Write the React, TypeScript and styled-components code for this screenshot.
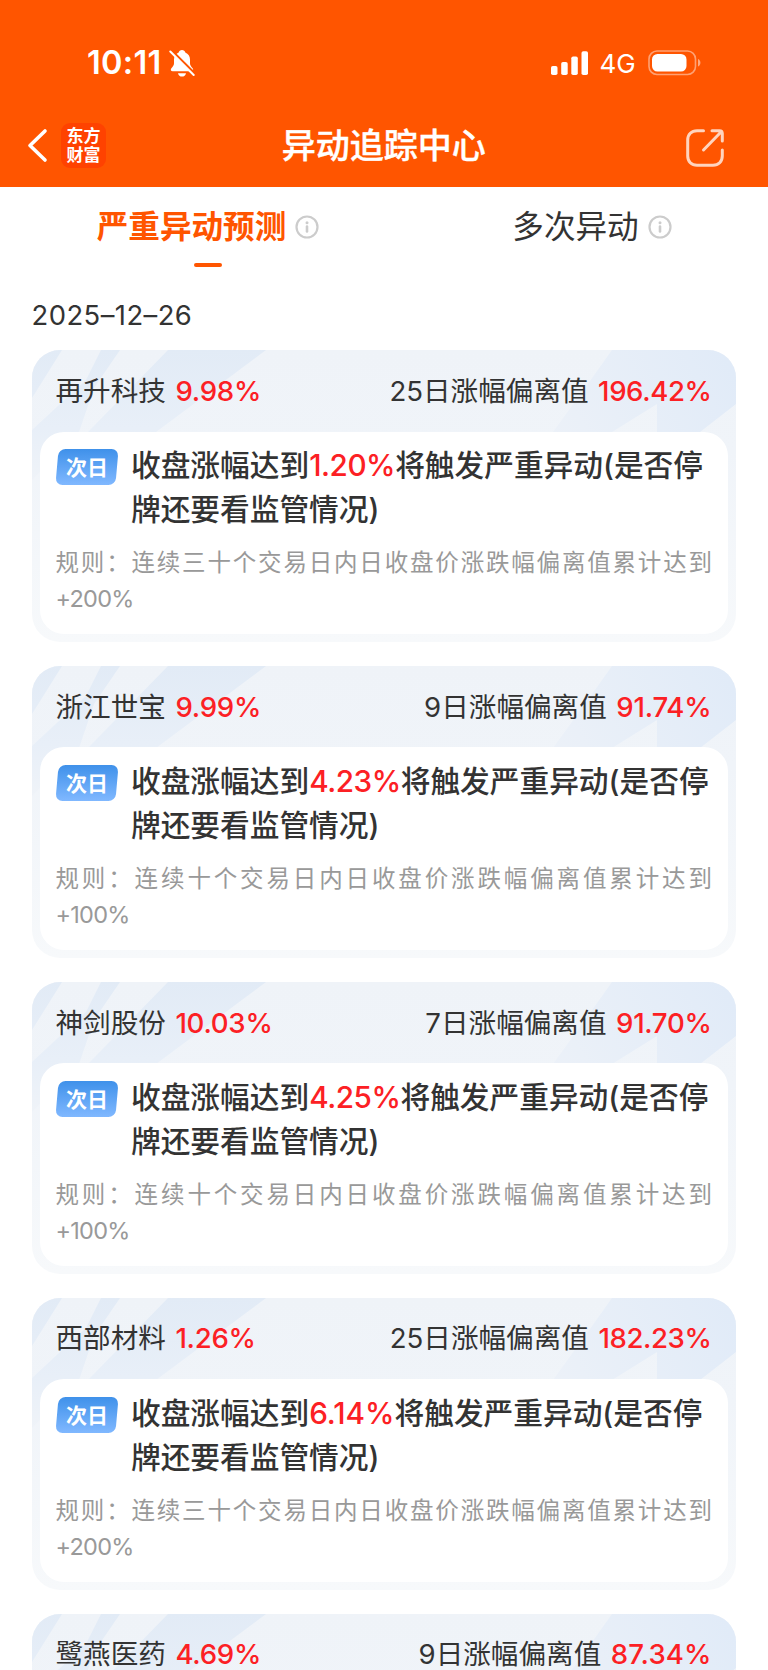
import React from "react";
import styled, { createGlobalStyle } from "styled-components";

const GlobalStyle = createGlobalStyle`
  * { box-sizing: border-box; }
  body {
    margin: 0;
    background: #fff;
    color: #333;
    font-family: Inter, "Noto Sans CJK SC", sans-serif;
  }
`;

const Screen = styled.main`
  width: 768px;
  height: 1670px;
  overflow: hidden;
  background: #fff;
`;

const Header = styled.header`
  height: 187px;
  background: #ff5500;
  color: #fff;
`;

const StatusBar = styled.div`
  height: 104px;
  padding: 22px 67px 0 87px;
  display: flex;
  align-items: center;
  justify-content: space-between;
`;

const StatusGroup = styled.div`
  display: flex;
  align-items: center;
`;

const Clock = styled.span`
  font-size: 32.5px;
  font-weight: 600;
  line-height: 40px;
  letter-spacing: 0.3px;
  width: 82px;
`;

const Network = styled.span`
  font-size: 26px;
  line-height: 32px;
  margin: 2px 12.5px 0 10.5px;
  width: 36px;
`;

const NavBar = styled.div`
  height: 83px;
  padding: 0 44.5px 0 27px;
  display: grid;
  grid-template-columns: 1fr auto 1fr;
  align-items: center;
`;

const NavLeft = styled.div`
  display: flex;
  align-items: center;
  gap: 13px;
`;

const Logo = styled.div`
  width: 45px;
  height: 45px;
  border-radius: 9px;
  background: #ff4200;
  display: flex;
  flex-direction: column;
  align-items: center;
  padding-top: 2px;
  font-family: "Noto Sans CJK SC", sans-serif;
  font-weight: 700;
  font-size: 17px;
`;

const LogoLine = styled.span`
  display: block;
  height: 19px;
  line-height: 19px;
`;

const Title = styled.h1`
  margin: 1px 0 0;
  padding-left: 17px;
  font-size: 34px;
  font-weight: 500;
  line-height: 48px;
  -webkit-text-stroke: 0.4px currentColor;
`;

const NavRight = styled.div`
  display: flex;
  justify-content: flex-end;
  padding-top: 5px;
`;

const Tabs = styled.nav`
  height: 92px;
  display: grid;
  grid-template-columns: 416px 352px;
`;

const Tab = styled.div<{ $active?: boolean }>`
  display: flex;
  flex-direction: column;
  align-items: center;
  padding-top: 16px;
  color: ${(p) => (p.$active ? "#ff5500" : "#333")};
  font-size: 31.6px;
  font-weight: ${(p) => (p.$active ? 700 : 400)};
  line-height: 46px;
`;

const TabLabel = styled.div`
  display: flex;
  align-items: flex-start;
  gap: 9px;
  height: 48px;

  svg {
    margin-top: 11.5px;
  }
`;

const TabText = styled.span`
  padding-top: 1px;
`;

const Underline = styled.div`
  width: 28px;
  height: 4px;
  margin-top: 11.5px;
  border-radius: 2px;
  background: #ff5500;
`;

const DateLine = styled.div`
  height: 71px;
  padding: 18px 31.5px 0;
  font-size: 27.4px;
  letter-spacing: 0.45px;
  line-height: 36px;
`;

const CardList = styled.section`
  padding: 0 32px;
  display: flex;
  flex-direction: column;
  gap: 23.6px;
`;

const CardBox = styled.article`
  position: relative;
  flex: none;
  height: 292.3px;
  padding: 0 8px 8px;
  border-radius: 28px;
  overflow: hidden;
  background: linear-gradient(#eff3f8 0%, #f0f4f9 35%, #f7f9fb 100%);
  display: flex;
  flex-direction: column;
`;

const Stripes = styled.svg`
  position: absolute;
  top: 0;
  left: 0;
`;

const CardHead = styled.div`
  position: relative;
  height: 81.5px;
  padding: 0 16.5px 0 15.5px;
  display: flex;
  align-items: center;
  justify-content: space-between;
  font-size: 27.6px;
  line-height: 40px;
`;

const HeadItem = styled.div`
  display: flex;
  align-items: baseline;
  gap: 9.5px;
`;

const Rate = styled.span<{ $tracking?: number }>`
  color: #fc2024;
  font-weight: 500;
  font-size: 27.6px;
  letter-spacing: ${(p) => p.$tracking ?? -0.25}px;
`;

const Panel = styled.div`
  position: relative;
  flex: 1;
  border-radius: 24px;
  background: #fff;
  padding: 11.5px 16px 0 15.5px;
`;

const Forecast = styled.div`
  display: flex;
  align-items: flex-start;
  gap: 12.5px;
`;

const Badge = styled.div`
  position: relative;
  flex: none;
  width: 63px;
  height: 36px;
  margin-top: 6px;
  display: flex;
  align-items: center;
  justify-content: center;
  color: #fff;
  font-family: "Noto Sans CJK SC", sans-serif;
  font-size: 21px;
  font-weight: 700;
  line-height: 34px;
  padding-bottom: 2px;
  z-index: 0;
  &::before {
    content: "";
    position: absolute;
    inset: 0 1.5px;
    z-index: -1;
    border-radius: 7px;
    transform: skewX(-5deg);
    background: linear-gradient(#3f91ea, #80b8ff);
  }
`;

const ForecastText = styled.p`
  margin: 0;
  flex: 1;
  white-space: nowrap;
  font-size: 29.7px;
  font-weight: 500;
  line-height: 44px;
`;

const Threshold = styled.span<{ $tracking?: number }>`
  color: #fc2024;
  letter-spacing: ${(p) => p.$tracking ?? -0.45}px;
`;

const Rule = styled.p`
  margin: 14px 0 0;
  font-size: 23.5px;
  line-height: 36px;
  color: #999;
  text-align: justify;
  width: 656.5px;
`;

const Limit = styled.span`
  letter-spacing: -0.75px;
`;

interface Stock {
  name: string;
  rate: string;
  days: number;
  deviation: string;
  deviationTracking: number;
  trigger: string;
  triggerTracking?: number;
  period: string;
  limit: string;
}

const stocks: Stock[] = [
  { name: "再升科技", rate: "9.98%", days: 25, deviation: "196.42%", deviationTracking: -0.4, trigger: "1.20%", period: "三十", limit: "+200%" },
  { name: "浙江世宝", rate: "9.99%", days: 9, deviation: "91.74%", deviationTracking: -0.2, trigger: "4.23%", period: "十", limit: "+100%" },
  { name: "神剑股份", rate: "10.03%", days: 7, deviation: "91.70%", deviationTracking: -0.3, trigger: "4.25%", period: "十", limit: "+100%" },
  { name: "西部材料", rate: "1.26%", days: 25, deviation: "182.23%", deviationTracking: -0.4, trigger: "6.14%", triggerTracking: 0, period: "三十", limit: "+200%" },
  { name: "鹭燕医药", rate: "4.69%", days: 9, deviation: "87.34%", deviationTracking: 0.1, trigger: "5.36%", period: "十", limit: "+100%" },
];

const BellOff = () => (
  <svg width="26" height="29" viewBox="0 0 26 29" fill="none">
    <path d="M13 1c1.7 0 3 1 3.3 2.4 3 1.2 4.7 3.800 4.700 7.100v3.700c0 1.700.8 3 2.400 4.700 1.300 1.400.9 3.300-1 3.300H3.700c-2 0-2.500-1.900-1.100-3.300C4.200 17.200 5 15.900 5 14.200v-3.700c0-3.300 1.700-5.900 4.700-7.100C10 2 11.300 1 13 1Z" fill="#fff" />
    <path d="M9 24.200h8c-.5 2.200-2 3.400-4 3.400s-3.500-1.200-4-3.400Z" fill="#fff" />
    <path d="M2 1.300 26 25" stroke="#ff5500" strokeWidth="3" />
    <path d="M1.300 2.500 24.700 26" stroke="#fff" strokeWidth="2" strokeLinecap="round" />
  </svg>
);

const Signal = () => (
  <svg width="38" height="24" viewBox="0 0 38 24" fill="#fff">
    <rect x="0" y="15" width="6.500" height="9" rx="1.800" />
    <rect x="10.200" y="11" width="6.500" height="13" rx="1.800" />
    <rect x="20.300" y="5.500" width="6.500" height="18.500" rx="1.800" />
    <rect x="30.500" y="0.300" width="6.500" height="23.700" rx="1.800" />
  </svg>
);

const Battery = () => (
  <svg width="53" height="26" viewBox="0 0 53 26" fill="none">
    <rect x="1" y="1" width="46.500" height="23.500" rx="8" stroke="#fff" strokeOpacity="0.450" strokeWidth="1.600" />
    <rect x="4" y="4" width="34.500" height="17.500" rx="5.500" fill="#fff" />
    <path d="M50 9v7.500c1.500-.6 2.400-2 2.400-3.750S51.500 9.600 50 9Z" fill="#fff" fillOpacity="0.500" />
  </svg>
);

const BackIcon = () => (
  <svg width="21" height="35" viewBox="0 0 21 35" fill="none">
    <path d="M18 3 3 17.500 18 32" stroke="#fff" strokeWidth="3.600" strokeLinecap="round" strokeLinejoin="round" />
  </svg>
);

const ShareIcon = () => (
  <svg width="38" height="38" viewBox="0 0 38 38" fill="none" stroke="#ffd4be" strokeWidth="3" strokeLinecap="round" strokeLinejoin="round">
    <path d="M17.500 1.700H11C5.500 1.700 1.700 5.500 1.700 11v16c0 5.500 3.800 9.300 9.300 9.300h16c5.500 0 9.300-3.800 9.300-9.300v-6" />
    <path d="M26 1.700h7.500c1.800 0 2.800 1 2.800 2.800V12M35 3 17.500 21" />
  </svg>
);

const InfoIcon = () => (
  <svg width="24" height="24" viewBox="0 0 24 24" fill="none">
    <circle cx="12" cy="12" r="10.500" stroke="#ccc" strokeWidth="2.200" />
    <circle cx="12" cy="7.800" r="1.500" fill="#ccc" />
    <path d="M12 11.500v5" stroke="#ccc" strokeWidth="2.600" strokeLinecap="round" />
  </svg>
);

const CardStripes = () => (
  <Stripes width="704" height="292" viewBox="0 0 704 292">
    <defs>
      <linearGradient id="stripeLeft" x1="0" y1="0" x2="0" y2="130" gradientUnits="userSpaceOnUse">
        <stop offset="0" stopColor="#e2ebf6" />
        <stop offset="0.600" stopColor="#e8eff8" />
        <stop offset="1" stopColor="#eff3f8" />
      </linearGradient>
      <linearGradient id="stripeRight" x1="520" y1="90" x2="690" y2="0" gradientUnits="userSpaceOnUse">
        <stop offset="0" stopColor="#ecf1f8" />
        <stop offset="1" stopColor="#e1ebf8" />
      </linearGradient>
    </defs>
    <g fill="url(#stripeLeft)">
      <path d="M0 0h30L0 48Z" />
      <path d="M69 0h19L62 38 47 82 0 130V80L54 30Z" />
      <path d="M136 0h98L124 82H56Z" />
    </g>
    <path d="M580 0H704V54L668 82H625V54L580 82H521L558 31Z" fill="url(#stripeRight)" />
  </Stripes>
);

const StockCard = ({ stock }: { stock: Stock }) => (
  <CardBox>
    <CardStripes />
    <CardHead>
      <HeadItem>
        <span>{stock.name}</span>
        <Rate>{stock.rate}</Rate>
      </HeadItem>
      <HeadItem>
        <span>{stock.days}日涨幅偏离值</span>
        <Rate $tracking={stock.deviationTracking}>{stock.deviation}</Rate>
      </HeadItem>
    </CardHead>
    <Panel>
      <Forecast>
        <Badge>次日</Badge>
        <ForecastText>
          收盘涨幅达到<Threshold $tracking={stock.triggerTracking}>{stock.trigger}</Threshold>将触发严重异动(是否停
          <br />
          牌还要看监管情况)
        </ForecastText>
      </Forecast>
      <Rule>
        规则：连续{stock.period}个交易日内日收盘价涨跌幅偏离值累计达到 <Limit>{stock.limit}</Limit>
      </Rule>
    </Panel>
  </CardBox>
);

export default function App() {
  return (
    <Screen>
      <GlobalStyle />
      <Header>
        <StatusBar>
          <StatusGroup>
            <Clock>10:11</Clock>
            <BellOff />
          </StatusGroup>
          <StatusGroup>
            <Signal />
            <Network>4G</Network>
            <Battery />
          </StatusGroup>
        </StatusBar>
        <NavBar>
          <NavLeft>
            <BackIcon />
            <Logo>
              <LogoLine>东方</LogoLine>
              <LogoLine>财富</LogoLine>
            </Logo>
          </NavLeft>
          <Title>异动追踪中心</Title>
          <NavRight>
            <ShareIcon />
          </NavRight>
        </NavBar>
      </Header>
      <Tabs>
        <Tab $active>
          <TabLabel>
            <TabText>严重异动预测</TabText>
            <InfoIcon />
          </TabLabel>
          <Underline />
        </Tab>
        <Tab>
          <TabLabel>
            <TabText>多次异动</TabText>
            <InfoIcon />
          </TabLabel>
        </Tab>
      </Tabs>
      <DateLine>2025–12–26</DateLine>
      <CardList>
        {stocks.map((stock) => (
          <StockCard key={stock.name} stock={stock} />
        ))}
      </CardList>
    </Screen>
  );
}
